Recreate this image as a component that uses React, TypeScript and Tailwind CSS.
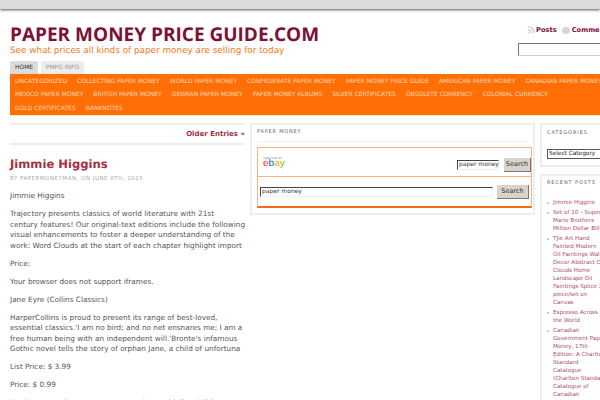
const row1 = ["UNCATEGORIZED", "COLLECTING PAPER MONEY", "WORLD PAPER MONEY", "CONFEDERATE PAPER MONEY", "PAPER MONEY PRICE GUIDE", "AMERICAN PAPER MONEY", "CANADIAN PAPER MONEY"];
const row2 = ["MEXICO PAPER MONEY", "BRITISH PAPER MONEY", "GERMAN PAPER MONEY", "PAPER MONEY ALBUMS", "SILVER CERTIFICATES", "OBSOLETE CURRENCY", "COLONIAL CURRENCY"];
const row3 = ["GOLD CERTIFICATES", "BANKNOTES"];

const recent = [
  ["Jimmie Higgins"],
  ["Set of 10 – Super", "Mario Brothers", "Million Dollar Bills"],
  ["TJie Art Hand", "Painted Modern", "Oil Paintings Wall", "Decor Abstract City", "Clouds Home", "Landscape Oil", "Paintings Splice 3", "piece/set on", "Canvas"],
  ["Espresso Across", "the World"],
  ["Canadian", "Government Paper", "Money, 17th", "Edition: A Charlton", "Standard", "Catalogue", "(Charlton Standard", "Catalogue of", "Canadian", "Government Paper"],
];

const trajectory = [
  "Trajectory presents classics of world literature with 21st",
  "century features! Our original-text editions include the following",
  "visual enhancements to foster a deeper understanding of the",
  "work: Word Clouds at the start of each chapter highlight import",
];

const harper = [
  "HarperCollins is proud to present its range of best-loved,",
  "essential classics.'I am no bird; and no net ensnares me; I am a",
  "free human being with an independent will.'Bronte's infamous",
  "Gothic novel tells the story of orphan Jane, a child of unfortuna",
];

function NavRow({ items }: { items: string[] }) {
  return (
    <div className="flex h-[13.5px] items-center gap-[10px] whitespace-nowrap">
      {items.map((t) => (
        <span key={t}>{t}</span>
      ))}
    </div>
  );
}

function Lines({ lines }: { lines: string[] }) {
  return (
    <p className="whitespace-nowrap">
      {lines.map((l) => (
        <span key={l} className="block">{l}</span>
      ))}
    </p>
  );
}

export default function App() {
  return (
    <div className="h-[400px] w-[600px] overflow-hidden bg-white font-['DejaVu_Sans',sans-serif] text-[#444] [text-rendering:geometricPrecision]">
      <div className="h-[9px] bg-[#dcdcdc] shadow-[0_1px_3px_#555]" />

      {/* header */}
      <div className="flex h-[52px] justify-between pl-[10px]">
        <div className="pt-[13px]">
          <div className="font-['Open_Sans',sans-serif] text-[19px] leading-[24px] font-bold whitespace-nowrap text-[#7b1136]">PAPER MONEY PRICE GUIDE.COM</div>
          <div className="text-[8.85px] leading-[10px] whitespace-nowrap text-[#f47920]">See what prices all kinds of paper money are selling for today</div>
        </div>
        <div className="w-[82px] shrink-0 overflow-hidden pt-[16px]">
          <div className="flex items-center text-[6.7px] leading-[10px] font-bold whitespace-nowrap text-[#7b1136]">
            <svg viewBox="0 0 10 10" className="ml-[9px] h-[8px] w-[8px] shrink-0 fill-none stroke-[#c8c8c8] stroke-[1.4]">
              <path d="M1 4.5a4.5 4.5 0 0 1 4.5 4.5M1 1a8 8 0 0 1 8 8" />
              <circle cx="2" cy="8" r="1.1" className="fill-[#c8c8c8] stroke-none" />
            </svg>
            <span className="ml-[1px]">Posts</span>
            <span className="ml-[5px] h-[7px] w-[8px] shrink-0 rounded-full bg-[#d5d5d5]" />
            <span className="ml-[2px]">Comments</span>
          </div>
          <div className="mt-[8px] h-[13px] w-[100px] border border-[#ccc] border-t-[#777] border-l-[#777] bg-white" />
        </div>
      </div>

      {/* nav */}
      <div className="ml-[10px] flex h-[13px] gap-[3px] text-[6px]">
        <div className="flex w-[28px] items-center justify-center rounded-t-[2px] bg-[#dcdcdc] text-[#333]">HOME</div>
        <div className="flex w-[43px] items-center justify-center rounded-t-[2px] bg-[#ececec] text-[#999]">PMPG INFO</div>
      </div>
      <div className="ml-[10px] h-[41px] overflow-hidden bg-[#ff6f06] pt-[0.5px] pl-[5px] text-[6px] text-[#ffd9b8]">
        <NavRow items={row1} />
        <NavRow items={row2} />
        <NavRow items={row3} />
      </div>
      <div className="ml-[10px] h-px bg-[#ffeab8]" />

      <div className="mt-[7px] flex items-start">
        {/* main column */}
        <div className="ml-[10px] w-[235px] shrink-0">
          <div className="flex h-[22px] items-center justify-end border-y-2 border-[#eeeeee] text-[7px] font-bold text-[#a5303f]">Older Entries »</div>
          <h1 className="mt-[11px] text-[11.6px] leading-[16px] font-bold text-[#a5303f]">Jimmie Higgins</h1>
          <div className="mt-[3px] text-[5.5px] leading-[8px] tracking-[0.5px] whitespace-nowrap text-[#aaa]">BY PAPERMONEYMAN, ON JUNE 8TH, 2015</div>
          <div className="mt-[8px] flex flex-col gap-[7.4px] text-[7.3px] leading-[10.6px] text-[#555]">
            <p>Jimmie Higgins</p>
            <Lines lines={trajectory} />
            <p>Price:</p>
            <p>Your browser does not support iframes.</p>
            <p>Jane Eyre (Collins Classics)</p>
            <Lines lines={harper} />
            <p>List Price: $ 3.99</p>
            <p>Price: $ 0.99</p>
            <p className="whitespace-nowrap">You have saved money on your purchase with <span className="text-[#a5303f]">Best Wishes</span></p>
          </div>
        </div>

        {/* middle widget */}
        <div className="ml-[5px] h-[92px] w-[285px] shrink-0 border-2 border-[#eeeeee] pr-px pl-[5px]">
          <div className="mr-[4px] flex h-[17px] items-center border-b border-[#f2f2f2] text-[5px] tracking-[0.8px] text-[#666]">PAPER MONEY</div>
          <div className="mt-[5px] h-[61px] border border-b-2 border-[#fcb27f] border-b-[#f26a1b]">
            <div className="flex h-[29px] items-center justify-between border-b border-[#fcb27f] pr-0 pl-[5px]">
              <div className="mb-[1px]">
                <div className="text-[3px] leading-[4px] text-[#777]">right now on</div>
                <div className="flex font-['Liberation_Sans',sans-serif] text-[10px] leading-[8px]">
                  <span className="text-[#e53238]">e</span>
                  <span className="text-[#0064d2]">b</span>
                  <span className="text-[#f5af02]">a</span>
                  <span className="text-[#86b817]">y</span>
                </div>
              </div>
              <div className="mt-[6px] flex items-center gap-[5px]">
                <div className="h-[10px] w-[42px] border border-[#eee] border-t-[#444] border-l-[#444] pl-[1px] text-[6px] leading-[8px] whitespace-nowrap text-[#333]">paper money</div>
                <div className="flex h-[14px] w-[27px] items-center justify-center border-r border-b border-[#777] bg-[#d8d4cc] text-[6.5px] text-[#333]">Search</div>
              </div>
            </div>
            <div className="flex h-[30px] items-center justify-between pr-[2px] pl-[2px]">
              <div className="h-[10px] w-[233px] border border-[#eee] border-t-[#444] border-l-[#444] pl-[1px] text-[6px] leading-[8px] text-[#333]">paper money</div>
              <div className="flex h-[14px] w-[32px] items-center justify-center border-r border-b border-[#777] bg-[#d8d4cc] text-[6.5px] text-[#333]">Search</div>
            </div>
          </div>
        </div>

        {/* right column */}
        <div className="ml-[5px] w-[80px] shrink-0">
          <div className="h-[44px] border-2 border-[#eeeeee] pl-[5px]">
            <div className="flex h-[17px] items-center text-[5px] tracking-[0.9px] whitespace-nowrap text-[#666]">CATEGORIES</div>
            <div className="mt-[7px] flex h-[10px] w-[80px] items-center border border-[#555] bg-white pl-[1px] text-[5.8px] whitespace-nowrap text-[#222]">Select Category</div>
          </div>
          <div className="mt-[7px] h-[300px] border-2 border-[#eeeeee] pl-[5px]">
            <div className="flex h-[16px] items-center text-[5px] tracking-[0.9px] whitespace-nowrap text-[#666]">RECENT POSTS</div>
            <ul className="mt-[7px] flex flex-col gap-[2px] text-[5.6px] leading-[8px] whitespace-nowrap text-[#b04a5e]">
              {recent.map((lines) => (
                <li key={lines[0]} className="relative pl-[6px]">
                  <span className="absolute top-[3px] left-0 h-[2px] w-[2px] rounded-full bg-[#bbb]" />
                  {lines.map((l) => (
                    <div key={l}>{l}</div>
                  ))}
                </li>
              ))}
            </ul>
          </div>
        </div>
      </div>
    </div>
  );
}
